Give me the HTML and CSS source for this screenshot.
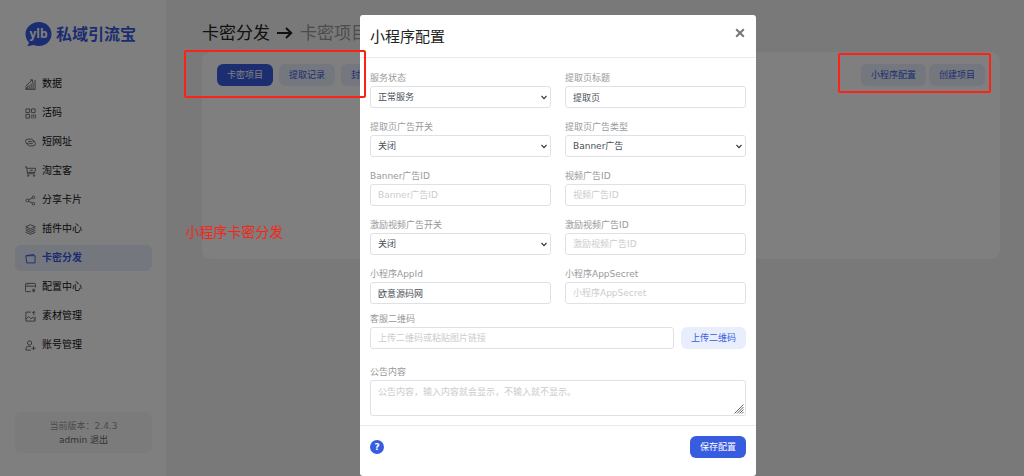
FILE: index.html
```html
<!DOCTYPE html>
<html lang="zh-CN">
<head>
<meta charset="utf-8">
<title>私域引流宝 - 卡密分发</title>
<link rel="stylesheet" href="styles.css">
</head>
<body>
<div class="app">
  <aside class="sidebar">
    <div class="logo">
      <svg class="logo-mark" viewBox="0 0 27 25" aria-hidden="true">
        <path d="M14 0C6.800 0 .5 5 .5 12c0 3.600 1.500 6.600 3.600 8.600L2.400 24.200l6-1.300c1.700.7 3.600 1.100 5.600 1.100 7.200 0 12.500-5.200 12.500-12S21.200 0 14 0z" fill="#375be0"/>
        <text class="logo-letters" x="13.500" y="16" text-anchor="middle">ylb</text>
      </svg>
      <span class="logo-name">私域引流宝</span>
    </div>
    <nav class="nav">
      <a class="nav-item" href="#"><svg class="icon" viewBox="0 0 12 12"><path d="M1 8.500V11h1.500V7.500M4.500 11V6.500M6.700 11V5M8.800 11V3.500M11 11.500V1M1 7.500L8 1M5.500 1H8.200v2.500M.5 11.300H11"/></svg>数据</a>
      <a class="nav-item" href="#"><svg class="icon" viewBox="0 0 12 12"><path d="M1 1h4v4H1zM7 1h4v4H7zM1 7h4v4H1zM7.500 7v4.500M9.500 7v2.500M11.200 7v4.500M9.500 10.500v1"/></svg>活码</a>
      <a class="nav-item" href="#"><svg class="icon" viewBox="0 0 12 12"><path d="M4 7.500H3.200a2.600 2.600 0 0 1 0-5.200H7a2.600 2.600 0 0 1 2.400 3.400M3.500 5h4M8 4.500h.8a2.600 2.600 0 0 1 0 5.200H5a2.600 2.600 0 0 1-2.400-3.400M8.500 7.200h-4"/></svg>短网址</a>
      <a class="nav-item" href="#"><svg class="icon" viewBox="0 0 12 12"><path d="M0 1h1.800l1 7.500h8M2 2.500h9.500L10.800 7H2.800M5.500 4.700h3"/><circle cx="3.500" cy="10.500" r=".8"/><circle cx="10" cy="10.500" r=".8"/></svg>淘宝客</a>
      <a class="nav-item" href="#"><svg class="icon" viewBox="0 0 12 12"><circle cx="2.500" cy="6" r="1.500"/><circle cx="9.200" cy="2.500" r="1.400"/><circle cx="9.200" cy="9.500" r="1.400"/><path d="M3.900 5.300L8 3.200M3.900 6.700L8 8.800"/></svg>分享卡片</a>
      <a class="nav-item" href="#"><svg class="icon" viewBox="0 0 12 12"><path d="M6 .8L11.300 3 6 5.200.7 3zM.7 5L6 7.200 11.300 5M.7 7L6 9.200 11.300 7M.7 9L6 11.200 11.300 9"/></svg>插件中心</a>
      <a class="nav-item active" href="#"><svg class="icon" viewBox="0 0 12 12"><path d="M1 3h10v7.800H1.800L1 3l8.500-1.500L10 3"/></svg>卡密分发</a>
      <a class="nav-item" href="#"><svg class="icon" viewBox="0 0 12 12"><path d="M6.500 10.500H1.300a.8.800 0 0 1-.8-.8V2.300a.8.800 0 0 1 .8-.8h9.400a.8.800 0 0 1 .8.800V6M.5 4.500h11M2.500 3h1M9.500 7.200v4M7.800 8.200l3.400 2M11.200 8.200l-3.400 2"/></svg>配置中心</a>
      <a class="nav-item" href="#"><svg class="icon" viewBox="0 0 12 12"><path d="M6.500 1.200H1v9.800h10V6M1 9l3-3 2.500 2.500L8.500 7 11 9M9.500.5v4M7.800 2L9.500.5 11.200 2"/></svg>素材管理</a>
      <a class="nav-item" href="#"><svg class="icon" viewBox="0 0 12 12"><circle cx="5" cy="3.200" r="2.300"/><path d="M6.500 11H1V9.500a2.500 2.500 0 0 1 2.500-2.500h3M9.300 6.800v4.400M7.100 9h4.400"/></svg>账号管理</a>
    </nav>
    <div class="account">
      <div class="version">当前版本：2.4.3</div>
      <div>admin <a class="logout" href="#">退出</a></div>
    </div>
  </aside>
  <main class="main">
    <h1 class="page-title">卡密分发
      <svg class="title-arrow" viewBox="0 0 16 12" aria-hidden="true"><path d="M0 6h14M9 1l5.200 5L9 11"/></svg>
      <span class="crumb">卡密项目</span>
    </h1>
    <section class="card">
      <div class="toolbar">
        <div class="tabs">
          <button class="btn btn-primary" type="button">卡密项目</button>
          <button class="btn btn-light" type="button">提取记录</button>
          <button class="btn btn-light" type="button">封禁</button>
        </div>
        <div class="actions">
          <button class="btn btn-light" type="button">小程序配置</button>
          <button class="btn btn-light" type="button">创建项目</button>
        </div>
      </div>
    </section>
  </main>
</div>

<div class="backdrop">
  <form class="modal" role="dialog" aria-labelledby="modal-title">
    <header class="modal-header">
      <h2 class="modal-title" id="modal-title">小程序配置</h2>
      <button class="close" type="button" aria-label="关闭"><svg class="close-icon" viewBox="0 0 10 10"><path d="M1.200 1.200l7.600 7.600M8.800 1.200L1.200 8.800"/></svg></button>
    </header>
    <div class="modal-body">
      <div class="grid">
        <div class="field"><label for="status">服务状态</label><select class="control" id="status"><option>正常服务</option></select></div>
        <div class="field"><label for="title">提取页标题</label><input class="control" id="title" type="text" value="提取页"></div>
        <div class="field"><label for="ad-switch">提取页广告开关</label><select class="control" id="ad-switch"><option>关闭</option></select></div>
        <div class="field"><label for="ad-type">提取页广告类型</label><select class="control" id="ad-type"><option>Banner广告</option></select></div>
        <div class="field"><label for="banner-id">Banner广告ID</label><input class="control" id="banner-id" type="text" placeholder="Banner广告ID"></div>
        <div class="field"><label for="video-id">视频广告ID</label><input class="control" id="video-id" type="text" placeholder="视频广告ID"></div>
        <div class="field"><label for="reward-switch">激励视频广告开关</label><select class="control" id="reward-switch"><option>关闭</option></select></div>
        <div class="field"><label for="reward-id">激励视频广告ID</label><input class="control" id="reward-id" type="text" placeholder="激励视频广告ID"></div>
        <div class="field"><label for="appid">小程序AppId</label><input class="control" id="appid" type="text" value="欧意源码网"></div>
        <div class="field"><label for="secret">小程序AppSecret</label><input class="control" id="secret" type="text" placeholder="小程序AppSecret"></div>
      </div>
      <div class="field">
        <label for="qrcode">客服二维码</label>
        <div class="upload">
          <input class="control" id="qrcode" type="text" placeholder="上传二维码或粘贴图片链接">
          <button class="btn btn-light" type="button">上传二维码</button>
        </div>
      </div>
      <div class="field notice">
        <label for="notice">公告内容</label>
        <textarea class="control textarea" id="notice" placeholder="公告内容，输入内容就会显示，不输入就不显示。"></textarea>
      </div>
    </div>
    <footer class="modal-footer">
      <a class="help" href="#" aria-label="帮助">?</a>
      <button class="btn btn-primary" type="button">保存配置</button>
    </footer>
  </form>
</div>

<div class="mark mark-tabs"></div>
<div class="mark mark-actions"></div>
<div class="mark-text">小程序卡密分发</div>
</body>
</html>
```
FILE: styles.css
```css
* {
  box-sizing: border-box;
}

body {
  margin: 0;
  background: #f2f2f2;
  color: #222;
  font: 9px/14px "DejaVu Sans", "Noto Sans CJK SC", sans-serif;
}

button, input, select, textarea {
  font: inherit;
}

a {
  color: inherit;
  text-decoration: none;
}

.app {
  display: flex;
  min-height: 100vh;
}

/* Sidebar */
.sidebar {
  display: flex;
  flex-direction: column;
  flex: none;
  width: 166px;
  padding: 22px 14px 23px 15px;
  background: #fff;
}

.logo {
  display: flex;
  align-items: center;
  gap: 4px;
  padding-left: 10px;
}

.logo-mark {
  width: 27px;
  height: 25px;
}

.logo-letters {
  fill: #fff;
  font: 700 12px "Open Sans", sans-serif;
}

.logo-name {
  color: #375be0;
  font-size: 16px;
  font-weight: 700;
  line-height: 24px;
  white-space: nowrap;
}

.nav {
  display: flex;
  flex-direction: column;
  gap: 3px;
  margin-top: 24px;
}

.nav-item {
  display: flex;
  align-items: center;
  gap: 6px;
  height: 26px;
  padding-left: 10px;
  border-radius: 6px;
  color: #111;
  font-size: 10px;
}

.nav-item.active {
  background: #e8eefd;
  color: #375be0;
  font-weight: 700;
}

.icon {
  width: 11px;
  height: 11px;
  fill: none;
  stroke: #666;
  stroke-width: 1;
}

.active .icon {
  stroke: #375be0;
}

.account {
  margin-top: auto;
  padding: 7px 0 6px;
  border-radius: 6px;
  background: #f6f6f6;
  color: #666;
  text-align: center;
}

.version {
  color: #999;
}

/* Page */
.main {
  flex: 1;
  min-width: 0;
  padding: 21px 24px 24px 36px;
}

.page-title {
  display: flex;
  align-items: center;
  gap: 7px;
  margin: 0 0 7px;
  font-size: 17px;
  font-weight: 400;
  line-height: 24px;
}

.title-arrow {
  width: 16px;
  height: 12px;
  fill: none;
  stroke: #222;
  stroke-width: 2;
}

.crumb {
  color: #999;
}

.card {
  min-height: 207px;
  padding: 12px 15px;
  border-radius: 9px;
  background: #fff;
}

.toolbar {
  display: flex;
  justify-content: space-between;
}

.tabs {
  display: flex;
  gap: 6px;
}

.actions {
  display: flex;
  gap: 3px;
}

.btn {
  flex: none;
  height: 22px;
  padding: 0 10px;
  border: 0;
  border-radius: 6px;
  white-space: nowrap;
}

.btn-primary {
  background: #385ce0;
  color: #fff;
}

.btn-light {
  background: #e9eefc;
  color: #385ce0;
}

/* Modal */
.backdrop {
  position: fixed;
  inset: 0;
  display: flex;
  align-items: flex-start;
  justify-content: center;
  padding: 15px 0 0 92px;
  background: rgba(0, 0, 0, 0.5);
  overflow: hidden;
}

.modal {
  width: 100%;
  max-width: 396px;
  border-radius: 3px;
  background: #fff;
}

.modal-header {
  display: flex;
  align-items: flex-start;
  justify-content: space-between;
  padding: 11px 10px 9px;
  border-bottom: 1px solid #e9ecef;
}

.modal-title {
  margin: 0;
  font-size: 15px;
  font-weight: 400;
  line-height: 22px;
}

.close {
  display: flex;
  padding: 2px 1px;
  border: 0;
  background: none;
}

.close-icon {
  width: 10px;
  height: 10px;
  stroke: #777;
  stroke-width: 2;
}

.modal-body {
  padding: 14px 10px 9px;
}

.grid {
  display: grid;
  grid-template-columns: 1fr 1fr;
  gap: 13px 14px;
  margin-bottom: 9px;
}

.field {
  display: flex;
  flex-direction: column;
  gap: 2px;
  min-width: 0;
}

.field label {
  color: #999;
  line-height: 12px;
}

.notice {
  margin-top: 17px;
}

.control {
  display: block;
  width: 100%;
  height: 22px;
  padding: 0 7px;
  border: 1px solid #dee2e6;
  border-radius: 3px;
  background: #fff;
  color: #495057;
}

select.control {
  appearance: none;
  background: #fff url("data:image/svg+xml,%3Csvg xmlns='http://www.w3.org/2000/svg' width='6' height='5' viewBox='0 0 6 5'%3E%3Cpath d='M.5 1L3 3.600 5.500 1' fill='none' stroke='%23333' stroke-width='1.100'/%3E%3C/svg%3E") no-repeat right 3px center;
}

.control::placeholder {
  color: #ccc;
}

.upload {
  display: flex;
  gap: 7px;
}

.upload .control {
  flex: 1;
  min-width: 0;
}

.textarea {
  height: 36px;
  padding: 4px 7px;
}

.textarea::-webkit-resizer {
  background: url("data:image/svg+xml,%3Csvg xmlns='http://www.w3.org/2000/svg' width='10' height='10' viewBox='0 0 10 10'%3E%3Cpath d='M.5 9.500l9-9M3 9.500L9.500 3M5.500 9.500l4-4M8 9.500L9.500 8' stroke='%23666'/%3E%3C/svg%3E") no-repeat right 1px bottom 1px;
}

.modal-footer {
  display: flex;
  align-items: center;
  justify-content: space-between;
  padding: 10px 10px 18px;
  border-top: 1px solid #e9ecef;
}

.help {
  width: 14px;
  height: 14px;
  border-radius: 50%;
  background: #385ce0;
  color: #fff;
  font-weight: 700;
  text-align: center;
}

/* Annotations over the page */
.mark {
  position: absolute;
  border: 2px solid #ff2116;
  border-radius: 2px;
}

.mark-tabs {
  left: 184px;
  top: 50px;
  width: 182px;
  height: 48px;
}

.mark-actions {
  left: 838px;
  top: 53px;
  width: 153px;
  height: 40px;
}

.mark-text {
  position: absolute;
  left: 185px;
  top: 222px;
  color: #ff2116;
  font-size: 14px;
  line-height: 20px;
}
```
